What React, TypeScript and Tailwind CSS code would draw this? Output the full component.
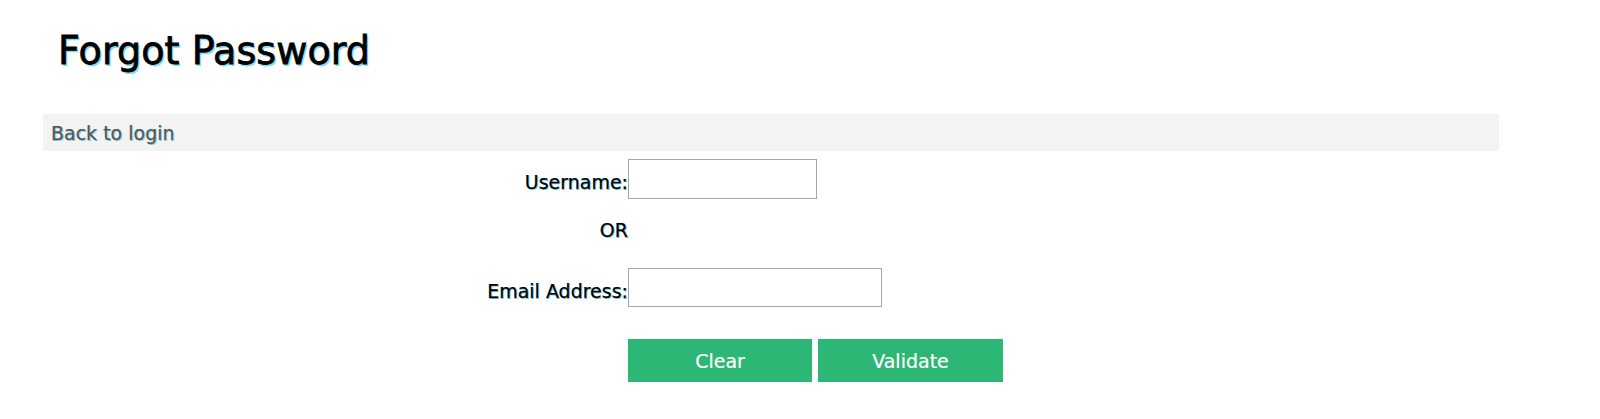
const font = "font-['DejaVu_Sans',Verdana,sans-serif]";
const shadow = "[text-shadow:1px_1px_0_#86dcf3] [-webkit-text-stroke:0.25px_currentColor]";

export default function App() {
  return (
    <div className={`${font} min-h-screen bg-white pl-[43px] text-black`}>
      <h1
        className="ml-[15px] pt-[29px] text-[38.2px] font-normal leading-[44px] [text-shadow:1.5px_1.5px_0_#86dcf3] [-webkit-text-stroke:0.8px_black]"
      >
        Forgot Password
      </h1>

      <div className="mt-[41px] h-[37px] w-[1456px] bg-[#f3f3f3] pl-[8px] pt-[8px]">
        <a
          href="#"
          className={`block text-[19px] leading-[22px] text-[#565656] ${shadow}`}
        >
          Back to login
        </a>
      </div>

      <form className="text-[19px]" onSubmit={(e) => e.preventDefault()}>
        <div className="mt-[8px] flex h-[40px] items-start">
          <label
            htmlFor="username"
            className={`mt-[12px] w-[585px] text-right leading-[22px] ${shadow}`}
          >
            Username:
          </label>
          <input
            id="username"
            type="text"
            className="h-[40px] w-[189px] border border-[#a6a6a6] bg-white px-1 outline-none"
          />
        </div>

        <div className="mt-[19.5px] flex">
          <span className={`w-[585px] text-right leading-[22px] ${shadow}`}>OR</span>
        </div>

        <div className="mt-[27.5px] flex h-[39px] items-start">
          <label
            htmlFor="email"
            className={`mt-[12px] w-[585px] text-right leading-[22px] ${shadow}`}
          >
            Email Address:
          </label>
          <input
            id="email"
            type="text"
            className="h-[39px] w-[254px] border border-[#a6a6a6] bg-white px-1 outline-none"
          />
        </div>

        <div className="mt-[32px] flex">
          <div className="w-[585px]" />
          <div className="flex gap-[6px]">
            <button
              type="reset"
              className="h-[43px] w-[184px] bg-[#2db775] text-[19px] leading-[22px] text-white [-webkit-text-stroke:0.2px_white]"
            >
              Clear
            </button>
            <button
              type="submit"
              className="h-[43px] w-[185px] bg-[#2db775] text-[19px] leading-[22px] text-white [-webkit-text-stroke:0.2px_white]"
            >
              Validate
            </button>
          </div>
        </div>
      </form>
    </div>
  );
}
